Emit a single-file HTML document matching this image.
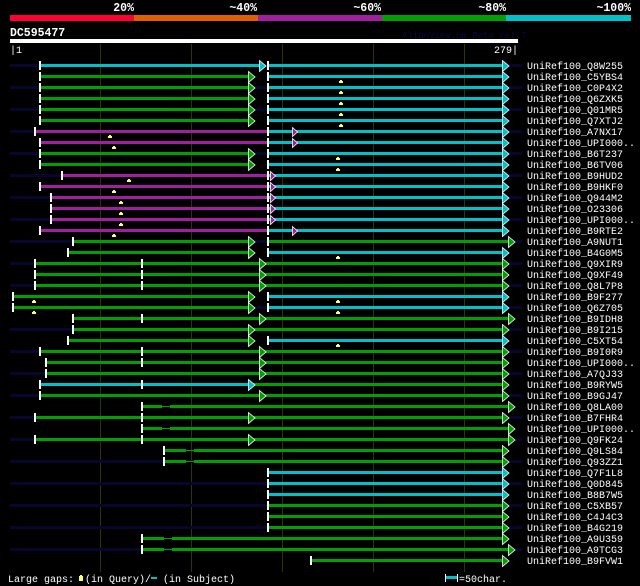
<!DOCTYPE html>
<html><head><meta charset="utf-8"><style>
html,body{margin:0;padding:0;background:#000;width:640px;height:586px;overflow:hidden}
svg{display:block}
text{font-family:"Liberation Mono",monospace}
.l{font-size:10px;fill:#fff}
.h{font-size:11.5px;font-weight:bold;fill:#fff}
.ar path{stroke-width:0.8}
</style></head><body>
<svg width="640" height="586" xmlns="http://www.w3.org/2000/svg">
<defs>
<path id="t" d="M0.5,-5.5l6.5,5.5l-6.5,5.5z"/>
<path id="m" d="M0.5,-4.5l5,4.5l-5,4.5z"/>
</defs>
<rect width="640" height="586" fill="#000"/>
<text class="h" x="134" y="11" text-anchor="end">20%</text>
<text class="h" x="257" y="11" text-anchor="end">~40%</text>
<text class="h" x="381" y="11" text-anchor="end">~60%</text>
<text class="h" x="506" y="11" text-anchor="end">~80%</text>
<text class="h" x="631" y="11" text-anchor="end">~100%</text>
<rect x="10" y="15" width="124" height="6" fill="#ff0030"/>
<rect x="134" y="15" width="124" height="6" fill="#e06000"/>
<rect x="258" y="15" width="124" height="6" fill="#a020a0"/>
<rect x="382" y="15" width="124" height="6" fill="#00a000"/>
<rect x="506" y="15" width="125" height="6" fill="#00c0c8"/>
<text class="h" x="10" y="36">DC595477</text>
<text x="402" y="38" style="font-size:9px;fill:#0a0a40">AlignView.pm Beta rel.7</text>
<rect x="10" y="39" width="508" height="4" fill="#fff"/>
<text class="l" x="10" y="53">|1</text>
<text class="l" x="518" y="53" text-anchor="end">279|</text>
<path d="M100.5,44V572M191.5,44V572M282.5,44V572M373.5,44V572M464.5,44V572" stroke="#333300" stroke-width="1"/>
<path stroke="#06062e" stroke-width="3" d="M10,65.5H522M10,87.5H522M10,109.5H522M10,131.5H522M10,153.5H522M10,175.5H522M10,197.5H522M10,219.5H522M10,241.5H522M10,263.5H522M10,285.5H522M10,307.5H522M10,329.5H522M10,351.5H522M10,373.5H522M10,395.5H522M10,417.5H522M10,439.5H522M10,461.5H522M10,483.5H522M10,505.5H522M10,527.5H522M10,549.5H522"/>
<path stroke="#00c0c8" stroke-width="3" d="M41,65.5H259M269,65.5H502
M269,76.5H502M269,87.5H502M269,98.5H502M269,109.5H502M269,120.5H502M269,131.5H502M269,142.5H502M269,153.5H502M269,164.5H502M269,175.5H502M269,186.5H502M269,197.5H502M269,208.5H502M269,219.5H502M269,230.5H502
M269,252.5H502M269,296.5H502M269,307.5H502M269,340.5H502M41,384.5H248
M269,472.5H502M269,483.5H502M269,494.5H502"/>
<path stroke="#a020a0" stroke-width="3" d="M36,131.5H268M41,142.5H268M63,175.5H268M41,186.5H268M52,197.5H268M52,208.5H268M52,219.5H268M41,230.5H268"/>
<path stroke="#00a000" stroke-width="3" d="M41,76.5H248M41,87.5H248M41,98.5H248M41,109.5H248M41,120.5H248M41,153.5H248M41,164.5H248
M74,241.5H248M269,241.5H508M69,252.5H248
M36,263.5H502M36,274.5H502M36,285.5H502
M14,296.5H248M14,307.5H248
M74,318.5H508M74,329.5H502M69,340.5H248
M41,351.5H502M47,362.5H502M47,373.5H502M249,384.5H502M41,395.5H502
M143,406.5H162M170,406.5H508M36,417.5H502M143,428.5H162M170,428.5H508M36,439.5H508
M165,450.5H186M194,450.5H502M165,461.5H186M194,461.5H502
M269,505.5H502M269,516.5H502M269,527.5H502
M143,538.5H164M172,538.5H502M143,549.5H164M172,549.5H508M312,560.5H502"/>
<path stroke="#00a000" stroke-width="1" d="M162,406.5H170M162,428.5H170M186,450.5H194M186,461.5H194M164,538.5H172M164,549.5H172"/>
<path stroke="#fff" stroke-width="2" d="M40,61V70M268,61V70
M40,72V81M268,72V81M40,83V92M268,83V92M40,94V103M268,94V103M40,105V114M268,105V114M40,116V125M268,116V125
M35,127V136M268,127V136M40,138V147M268,138V147M40,149V158M268,149V158M40,160V169M268,160V169
M62,171V180M268,171V180M40,182V191M268,182V191M51,193V202M268,193V202M51,204V213M268,204V213M51,215V224M268,215V224M40,226V235M268,226V235
M73,237V246M268,237V246M68,248V257M268,248V257
M35,259V268M142,259V268M35,270V279M142,270V279M35,281V290M142,281V290
M13,292V301M268,292V301M13,303V312M268,303V312
M73,314V323M142,314V323M73,325V334M68,336V345M268,336V345
M40,347V356M142,347V356M46,358V367M142,358V367M46,369V378M40,380V389M142,380V389M40,391V400
M142,402V411M35,413V422M142,413V422M142,424V433M35,435V444M142,435V444
M164,446V455M164,457V466M268,468V477M268,479V488M268,490V499M268,501V510M268,512V521M268,523V532
M142,534V543M142,545V554M311,556V565"/>
<g fill="#00c0c8" stroke="#fff" stroke-width="0.8">
<use href="#t" x="259" y="66"/>
<use href="#t" x="502" y="66"/><use href="#t" x="502" y="77"/><use href="#t" x="502" y="88"/><use href="#t" x="502" y="99"/><use href="#t" x="502" y="110"/><use href="#t" x="502" y="121"/><use href="#t" x="502" y="132"/><use href="#t" x="502" y="143"/><use href="#t" x="502" y="154"/><use href="#t" x="502" y="165"/><use href="#t" x="502" y="176"/><use href="#t" x="502" y="187"/><use href="#t" x="502" y="198"/><use href="#t" x="502" y="209"/><use href="#t" x="502" y="220"/><use href="#t" x="502" y="231"/>
<use href="#t" x="502" y="253"/><use href="#t" x="502" y="297"/><use href="#t" x="502" y="308"/><use href="#t" x="502" y="341"/><use href="#t" x="248" y="385"/>
<use href="#t" x="502" y="473"/><use href="#t" x="502" y="484"/><use href="#t" x="502" y="495"/>
</g>
<g fill="#a020a0" stroke="#fff" stroke-width="0.8">
<use href="#m" x="292" y="132"/><use href="#m" x="292" y="143"/><use href="#m" x="270" y="176"/><use href="#m" x="270" y="187"/><use href="#m" x="270" y="198"/><use href="#m" x="270" y="209"/><use href="#m" x="270" y="220"/><use href="#m" x="292" y="231"/>
</g>
<g fill="#00a000" stroke="#fff" stroke-width="0.8">
<use href="#t" x="248" y="77"/><use href="#t" x="248" y="88"/><use href="#t" x="248" y="99"/><use href="#t" x="248" y="110"/><use href="#t" x="248" y="121"/><use href="#t" x="248" y="154"/><use href="#t" x="248" y="165"/>
<use href="#t" x="248" y="242"/><use href="#t" x="508" y="242"/><use href="#t" x="248" y="253"/>
<use href="#t" x="259" y="264"/><use href="#t" x="502" y="264"/><use href="#t" x="259" y="275"/><use href="#t" x="502" y="275"/><use href="#t" x="259" y="286"/><use href="#t" x="502" y="286"/>
<use href="#t" x="248" y="297"/><use href="#t" x="248" y="308"/>
<use href="#t" x="259" y="319"/><use href="#t" x="508" y="319"/><use href="#t" x="248" y="330"/><use href="#t" x="502" y="330"/><use href="#t" x="248" y="341"/>
<use href="#t" x="259" y="352"/><use href="#t" x="502" y="352"/><use href="#t" x="259" y="363"/><use href="#t" x="502" y="363"/><use href="#t" x="259" y="374"/><use href="#t" x="502" y="374"/><use href="#t" x="502" y="385"/><use href="#t" x="259" y="396"/><use href="#t" x="502" y="396"/>
<use href="#t" x="508" y="407"/><use href="#t" x="248" y="418"/><use href="#t" x="502" y="418"/><use href="#t" x="508" y="429"/><use href="#t" x="248" y="440"/><use href="#t" x="508" y="440"/>
<use href="#t" x="502" y="451"/><use href="#t" x="502" y="462"/><use href="#t" x="502" y="506"/><use href="#t" x="502" y="517"/><use href="#t" x="502" y="528"/>
<use href="#t" x="502" y="539"/><use href="#t" x="508" y="550"/><use href="#t" x="502" y="561"/>
</g>
<g fill="#ffff60">
<path d="M340,80h2v1h1v2h-4v-2h1zM340,91h2v1h1v2h-4v-2h1zM340,102h2v1h1v2h-4v-2h1zM340,113h2v1h1v2h-4v-2h1zM340,124h2v1h1v2h-4v-2h1z
M109,135h2v1h1v2h-4v-2h1zM113,146h2v1h1v2h-4v-2h1zM337,157h2v1h1v2h-4v-2h1zM337,168h2v1h1v2h-4v-2h1z
M128,179h2v1h1v2h-4v-2h1zM113,190h2v1h1v2h-4v-2h1zM120,201h2v1h1v2h-4v-2h1zM120,212h2v1h1v2h-4v-2h1zM120,223h2v1h1v2h-4v-2h1zM113,234h2v1h1v2h-4v-2h1z
M337,256h2v1h1v2h-4v-2h1zM33,300h2v1h1v2h-4v-2h1zM337,300h2v1h1v2h-4v-2h1zM33,311h2v1h1v2h-4v-2h1zM337,311h2v1h1v2h-4v-2h1zM337,344h2v1h1v2h-4v-2h1z"/>
</g>
<g class="l">
<text class="l" x="527" y="69">UniRef100_Q8W255</text>
<text class="l" x="527" y="80">UniRef100_C5YBS4</text>
<text class="l" x="527" y="91">UniRef100_C0P4X2</text>
<text class="l" x="527" y="102">UniRef100_Q6ZXK5</text>
<text class="l" x="527" y="113">UniRef100_Q01MR5</text>
<text class="l" x="527" y="124">UniRef100_Q7XTJ2</text>
<text class="l" x="527" y="135">UniRef100_A7NX17</text>
<text class="l" x="527" y="146">UniRef100_UPI000..</text>
<text class="l" x="527" y="157">UniRef100_B6T237</text>
<text class="l" x="527" y="168">UniRef100_B6TV06</text>
<text class="l" x="527" y="179">UniRef100_B9HUD2</text>
<text class="l" x="527" y="190">UniRef100_B9HKF0</text>
<text class="l" x="527" y="201">UniRef100_Q944M2</text>
<text class="l" x="527" y="212">UniRef100_O23306</text>
<text class="l" x="527" y="223">UniRef100_UPI000..</text>
<text class="l" x="527" y="234">UniRef100_B9RTE2</text>
<text class="l" x="527" y="245">UniRef100_A9NUT1</text>
<text class="l" x="527" y="256">UniRef100_B4G0M5</text>
<text class="l" x="527" y="267">UniRef100_Q9XIR9</text>
<text class="l" x="527" y="278">UniRef100_Q9XF49</text>
<text class="l" x="527" y="289">UniRef100_Q8L7P8</text>
<text class="l" x="527" y="300">UniRef100_B9F277</text>
<text class="l" x="527" y="311">UniRef100_Q6Z705</text>
<text class="l" x="527" y="322">UniRef100_B9IDH8</text>
<text class="l" x="527" y="333">UniRef100_B9I215</text>
<text class="l" x="527" y="344">UniRef100_C5XT54</text>
<text class="l" x="527" y="355">UniRef100_B9I0R9</text>
<text class="l" x="527" y="366">UniRef100_UPI000..</text>
<text class="l" x="527" y="377">UniRef100_A7QJ33</text>
<text class="l" x="527" y="388">UniRef100_B9RYW5</text>
<text class="l" x="527" y="399">UniRef100_B9GJ47</text>
<text class="l" x="527" y="410">UniRef100_Q8LA00</text>
<text class="l" x="527" y="421">UniRef100_B7FHR4</text>
<text class="l" x="527" y="432">UniRef100_UPI000..</text>
<text class="l" x="527" y="443">UniRef100_Q9FK24</text>
<text class="l" x="527" y="454">UniRef100_Q9LS84</text>
<text class="l" x="527" y="465">UniRef100_Q93ZZ1</text>
<text class="l" x="527" y="476">UniRef100_Q7F1L8</text>
<text class="l" x="527" y="487">UniRef100_Q0D845</text>
<text class="l" x="527" y="498">UniRef100_B8B7W5</text>
<text class="l" x="527" y="509">UniRef100_C5XB57</text>
<text class="l" x="527" y="520">UniRef100_C4J4C3</text>
<text class="l" x="527" y="531">UniRef100_B4G219</text>
<text class="l" x="527" y="542">UniRef100_A9U359</text>
<text class="l" x="527" y="553">UniRef100_A9TCG3</text>
<text class="l" x="527" y="564">UniRef100_B9FVW1</text>
</g>
<text class="l" x="8" y="582">Large gaps:</text>
<path d="M80,575h2v1h1v5h-4v-5h1z" fill="#ffff60"/>
<text class="l" x="85" y="582">(in Query)/</text>
<rect x="151" y="577" width="6" height="2" fill="#00c0c8"/>
<text class="l" x="163" y="582">(in Subject)</text>
<rect x="445" y="574" width="1" height="8" fill="#fff"/>
<rect x="446" y="576" width="11" height="3" fill="#00c0c8"/>
<rect x="457" y="574" width="1" height="8" fill="#fff"/>
<text class="l" x="459" y="582">=50char.</text>
</svg>
</body></html>
